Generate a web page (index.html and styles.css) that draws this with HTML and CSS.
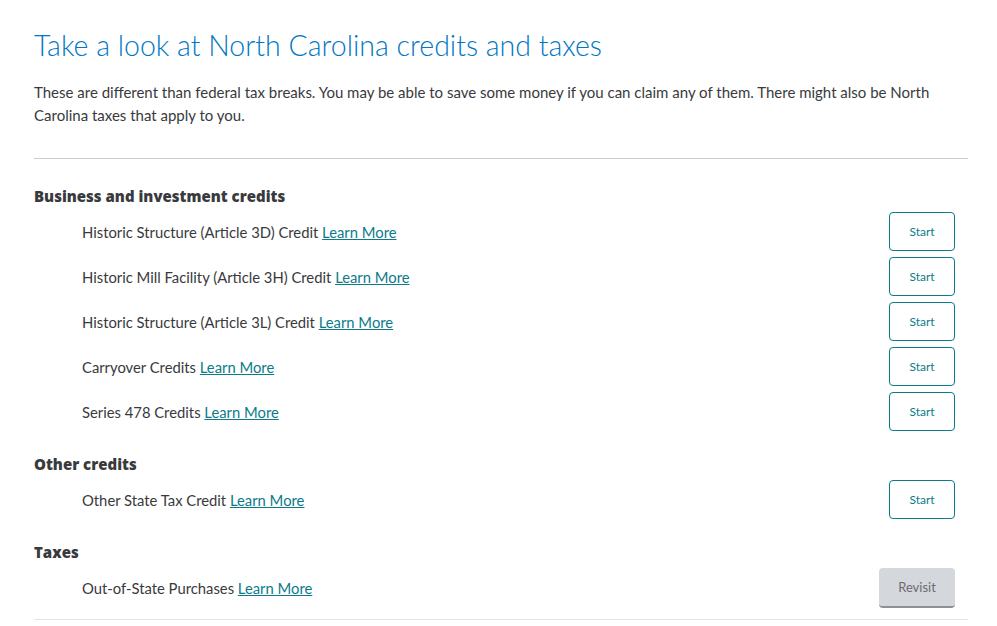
FILE: index.html
```html
<!DOCTYPE html>
<html lang="en">
<head>
    <meta charset="UTF-8">
    <title>North Carolina credits and taxes</title>
    <link rel="stylesheet" href="styles.css">
</head>
<body>
    <div class="container">
        <h1>Take a look at North Carolina credits and taxes</h1>
        <p class="intro">These are different than federal tax breaks. You may be able to save some money if you can claim any of them. There might also be North Carolina taxes that apply to you.</p>

        <div class="section">
            <h3>Business and investment credits</h3>
            <div class="row">
                <span>Historic Structure (Article 3D) Credit <a href="#">Learn More</a></span>
                <button class="btn">Start</button>
            </div>
            <div class="row">
                <span>Historic Mill Facility (Article 3H) Credit <a href="#">Learn More</a></span>
                <button class="btn">Start</button>
            </div>
            <div class="row">
                <span>Historic Structure (Article 3L) Credit <a href="#">Learn More</a></span>
                <button class="btn">Start</button>
            </div>
            <div class="row">
                <span>Carryover Credits <a href="#">Learn More</a></span>
                <button class="btn">Start</button>
            </div>
            <div class="row">
                <span>Series 478 Credits <a href="#">Learn More</a></span>
                <button class="btn">Start</button>
            </div>
        </div>

        <div class="section">
            <h3>Other credits</h3>
            <div class="row">
                <span>Other State Tax Credit <a href="#">Learn More</a></span>
                <button class="btn">Start</button>
            </div>
        </div>

        <div class="section last">
            <h3>Taxes</h3>
            <div class="row">
                <span>Out-of-State Purchases <a href="#">Learn More</a></span>
                <button class="btn revisit">Revisit</button>
            </div>
        </div>
    </div>
</body>
</html>
```

FILE: styles.css
```css
body {
    font-family: 'Lato', sans-serif;
    background-color: #ffffff;
    color: #393a3d;
    margin: 0;
    padding: 0;
}
.container {
    width: 934px;
    margin-left: 34px;
    padding-top: 28px;
}
h1 {
    font-size: 28.5px;
    font-weight: 300;
    color: #0077c5;
    margin: 0 0 19px 0;
    line-height: 34px;
}
.intro {
    font-size: 15px;
    line-height: 23px;
    margin: 0;
    padding-bottom: 31px;
    border-bottom: 1px solid #cccccc;
}
.section {
    padding-top: 20px;
}
.intro + .section {
    padding-top: 27px;
}
h3 {
    font-family: 'Open Sans', sans-serif;
    font-size: 15px;
    font-weight: 800;
    margin: 0 0 3px 0;
    line-height: 20px;
}
.row {
    display: flex;
    justify-content: space-between;
    align-items: center;
    height: 45px;
    padding-left: 48px;
    padding-right: 13px;
    font-size: 14.8px;
}
.row a {
    color: #0b7b8b;
    text-decoration: underline;
}
.btn {
    font-family: 'Lato', sans-serif;
    font-size: 12px;
    color: #0b7b8b;
    background-color: #ffffff;
    border: 1px solid #0b7b8b;
    border-radius: 4px;
    width: 66px;
    height: 39px;
    cursor: pointer;
}
.btn.revisit {
    width: 76px;
    height: 40px;
    background-color: #d4d7dc;
    color: #6b6c72;
    border: none;
    border-bottom: 2px solid #8d9096;
    font-size: 13px;
}
.section.last {
    padding-bottom: 9px;
    border-bottom: 1px solid #e3e3e3;
}
```
